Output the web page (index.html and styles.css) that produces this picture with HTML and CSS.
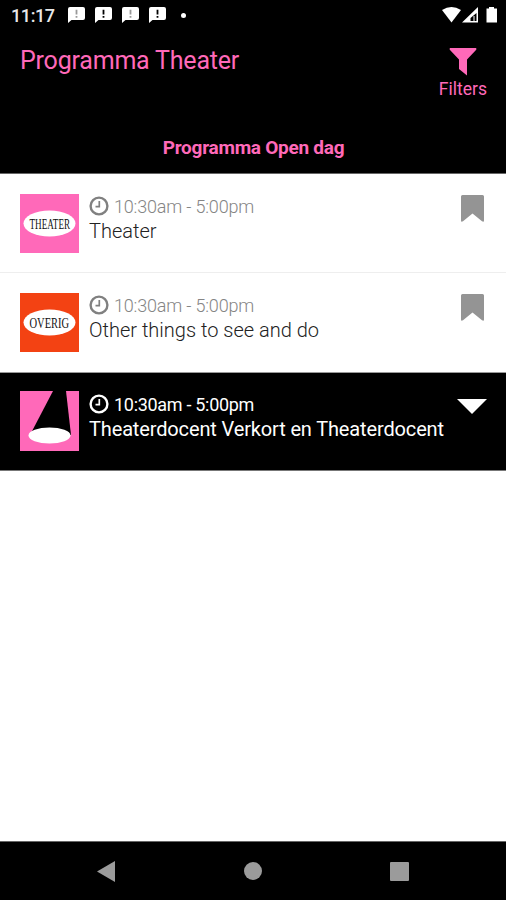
FILE: index.html
```html
<!DOCTYPE html>
<html lang="nl">
<head>
<meta charset="utf-8">
<title>Programma Theater</title>
<link rel="stylesheet" href="styles.css">
</head>
<body>
<svg class="defs" width="0" height="0" aria-hidden="true">
  <defs>
    <symbol id="notice" viewBox="0 0 17 16"><path fill="#fff" d="M2 0H15Q17 0 17 2V11Q17 13 15 13H3.5L0 16V2Q0 0 2 0Z"/><path stroke="currentColor" stroke-width="1.8" d="M8.5 2.7V7.4M8.5 8.9V10.7"/></symbol>
    <symbol id="clock" viewBox="0 0 20 20"><circle cx="10" cy="10" r="8.4" fill="none" stroke="currentColor" stroke-width="2.4"/><path d="M10.3 5V10.7H6.5" fill="none" stroke="currentColor" stroke-width="1.7"/></symbol>
    <symbol id="bookmark" viewBox="0 0 23 27"><path fill="#949494" d="M1.5 0H21.5Q23 0 23 1.5V25.5Q23 27.5 21 26.3L11.5 18.5L2 26.3Q0 27.5 0 25.5V1.5Q0 0 1.5 0Z"/></symbol>
  </defs>
</svg>
<div class="screen">
  <header class="top">
    <div class="status">
      <span class="time">11:17</span>
      <div class="notices">
        <svg class="dim"><use href="#notice"/></svg>
        <svg><use href="#notice"/></svg>
        <svg class="dim"><use href="#notice"/></svg>
        <svg><use href="#notice"/></svg>
        <i class="dot"></i>
      </div>
      <svg class="signals" width="56" height="16" viewBox="0 0 56 16"><path fill="#fff" d="M0 3Q9.500-3 19 3L9.500 15.500Z"/><path fill="#fff" fill-rule="evenodd" d="M36 0V15.500H20ZM34.500 6L28.500 11V14H34.500Z"/><path stroke="#fff" d="M32 9V14"/><path fill="#fff" d="M47 0H52V1.500H55V15.500H44.500V1.500H47Z"/></svg>
    </div>
    <div class="heading">
      <h1>Programma Theater</h1>
      <div class="filters">
        <svg width="28" height="28" viewBox="0 0 28 28"><path fill="#ff69b9" d="M1 0H27Q28 1 27 2L18 11.500V27.500L10 21V11.500L1 2Q0 1 1 0Z"/></svg>
        <span>Filters</span>
      </div>
    </div>
    <h2>Programma Open dag</h2>
  </header>
  <main>
    <article class="row">
      <svg class="thumb" viewBox="0 0 59 59"><rect width="59" height="59" fill="#ff69b9"/><ellipse cx="29.500" cy="29.500" rx="26" ry="13" fill="#fff"/><text transform="translate(9.5 35) scale(.61 1)">THEATER</text></svg>
      <div class="info"><div class="hours"><svg><use href="#clock"/></svg><span>10:30am - 5:00pm</span></div><div class="name">Theater</div></div>
      <svg class="mark"><use href="#bookmark"/></svg>
    </article>
    <article class="row second">
      <svg class="thumb" viewBox="0 0 59 59"><rect width="59" height="59" fill="#f34213"/><ellipse cx="29.500" cy="29.500" rx="26" ry="13" fill="#fff"/><text transform="translate(9.5 35) scale(.7 1)">OVERIG</text></svg>
      <div class="info"><div class="hours"><svg><use href="#clock"/></svg><span>10:30am - 5:00pm</span></div><div class="name">Other things to see and do</div></div>
      <svg class="mark"><use href="#bookmark"/></svg>
    </article>
    <article class="row dark">
      <svg class="thumb" viewBox="0 0 59 60" preserveAspectRatio="none"><rect width="59" height="60" fill="#ff69b9"/><path d="M33 0H46L51 44H10Z"/><ellipse cx="29.500" cy="44.500" rx="21" ry="8" fill="#fff"/></svg>
      <div class="info"><div class="hours"><svg><use href="#clock"/></svg><span>10:30am - 5:00pm</span></div><div class="name">Theaterdocent Verkort en Theaterdocent</div></div>
      <svg class="arrow" viewBox="0 0 30 15"><path fill="#fff" d="M0 0H30L15 15Z"/></svg>
    </article>
  </main>
  <nav>
    <svg width="18" height="21" viewBox="0 0 18 21"><path fill="#9b9b9b" d="M18 0V21L0 10.500Z"/></svg>
    <svg width="18" height="18" viewBox="0 0 18 18"><circle cx="9" cy="9" r="9" fill="#9b9b9b"/></svg>
    <svg width="19" height="19" viewBox="0 0 19 19"><rect width="19" height="19" rx="1" fill="#9b9b9b"/></svg>
  </nav>
</div>
</body>
</html>
```
FILE: styles.css
```css
* { box-sizing: border-box; }
body { margin: 0; font-family: Roboto, sans-serif; background: #fff; }
svg { display: block; flex: none; }
.defs { display: none; }
.screen { display: flex; flex-direction: column; width: 506px; height: 900px; overflow: hidden; }
.top { height: 174px; flex: none; background: #000; color: #ff69b9; border-bottom: 1px solid #666; }
.status { display: flex; height: 32px; padding: 7px 8px 0 11px; color: #e8e8e8; }
.time { width: 57px; font-size: 18px; line-height: 18px; font-weight: 500; letter-spacing: -.4px; white-space: nowrap; }
.notices { display: flex; flex: 1; gap: 10px; }
.notices svg { width: 17px; height: 16px; color: #000; }
.notices .dim { color: #999; }
.dot { width: 5px; height: 5px; margin: 6px 0 0 5px; border-radius: 50%; background: #fff; }
.heading { display: flex; justify-content: space-between; height: 94px; padding: 12px 19px 0 20px; }
h1 { margin: 0; padding-top: 1px; font-size: 25px; line-height: 32px; font-weight: 400; letter-spacing: -.2px; white-space: nowrap; }
.filters { display: flex; flex-direction: column; align-items: center; padding-top: 4px; }
.filters span { margin-top: 3px; font-size: 17.500px; line-height: 20px; }
h2 { margin: 0; padding: 10px 0 0 1px; text-align: center; font-size: 19px; line-height: 24px; font-weight: 700; letter-spacing: -.26px; }
main { flex: 1; }
.row { display: flex; height: 99px; padding: 20px 22px 0 20px; border-bottom: 1px solid #eee; color: #222; }
.second { height: 100px; border-bottom-color: #999; }
.dark { height: 98px; padding: 18px 19px 0 20px; background: #000; color: #fff; border-bottom: 1px solid #777; }
.thumb { width: 59px; height: 59px; }
.dark .thumb { height: 60px; }
.thumb text { font: 15px "Liberation Serif", serif; fill: #111; }
.info { flex: 1; margin-left: 10px; }
.hours { display: flex; align-items: center; gap: 5px; height: 24px; color: #858585; font-size: 18px; letter-spacing: -.18px; white-space: nowrap; }
.hours svg { width: 20px; height: 20px; color: #808080; }
.dark .hours, .dark .hours svg { color: #fff; }
.dark .hours { letter-spacing: -.3px; }
.dark .info { padding-top: 1px; }
.name { height: 26px; font-size: 20px; line-height: 27px; white-space: nowrap; }
.dark .name { letter-spacing: -.14px; }
.row:not(.dark) .info { font-weight: 300; }
.mark { width: 23px; height: 27px; margin-top: 1px; }
.arrow { width: 30px; height: 15px; margin-top: 8px; }
nav { display: flex; align-items: center; justify-content: space-between; flex: none; height: 59px; padding: 0 97px; background: #000; border-top: 1px solid #666; }
```
